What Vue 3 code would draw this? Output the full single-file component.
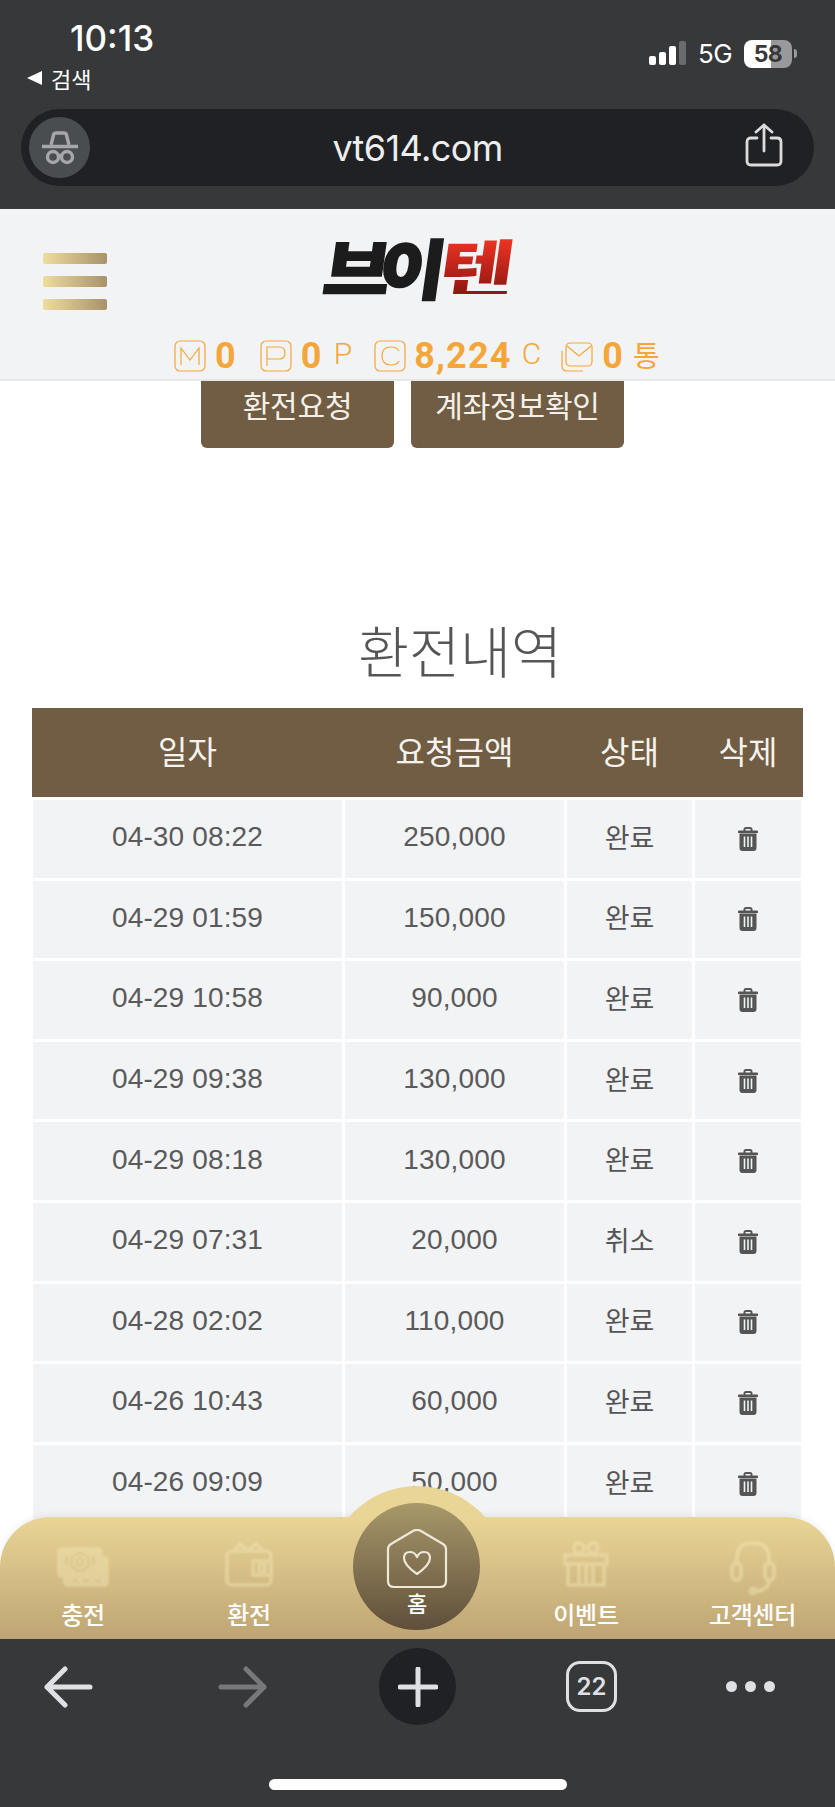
<template>
  <div class="phone">
    <section class="chrome">
      <div class="status">
        <div class="status-left">
          <div class="time">10:13</div>
          <div class="back-app"><span class="tri"></span>검색</div>
        </div>
        <div class="status-right">
          <div class="signal">
            <i class="s1"></i><i class="s2"></i><i class="s3"></i><i class="s4"></i>
          </div>
          <span class="net">5G</span>
          <div class="battery"><span>58</span></div>
          <i class="battery-tip"></i>
        </div>
      </div>
      <div class="url-bar">
        <div class="incognito">
          <svg width="38" height="34" viewBox="0 0 38 34" fill="none" stroke="#a5a7aa" stroke-width="3.400">
            <path d="M1 15.500h36" />
            <path d="M10 14l2.500-10q.5-2 2.500-2h8q2 0 2.500 2L28 14" />
            <circle cx="12" cy="26" r="5.500" />
            <circle cx="26" cy="26" r="5.500" />
            <path d="M17.500 24.500q1.500-1 3 0" stroke-width="2.500" />
          </svg>
        </div>
        <span class="url">vt614.com</span>
        <svg class="share" width="38" height="44" viewBox="0 0 38 44" fill="none" stroke="#dcdcde" stroke-width="2.800" stroke-linecap="round" stroke-linejoin="round">
          <path d="M19 28V2M11 9l8-7 8 7" />
          <path d="M12 15H6q-4 0-4 4v19q0 4 4 4h26q4 0 4-4V19q0-4-4-4h-6" />
        </svg>
      </div>
    </section>

    <header class="site-header">
      <div class="brand-row">
        <div class="burger"><i></i><i></i><i></i></div>
        <div class="logo"><span class="logo-black">브이</span><span class="logo-red">텐</span></div>
      </div>
      <div class="wallet">
        <span class="badge">
          <svg width="32" height="32" viewBox="0 0 32 32" fill="none" stroke="#f4a63a" stroke-width="1.200">
            <rect x="1" y="1" width="30" height="30" rx="5" />
            <path d="M7 25V8l9 12 9-12v17" />
          </svg>
        </span>
        <b class="num">0</b>
        <span class="badge gap-p">
          <svg width="32" height="32" viewBox="0 0 32 32" fill="none" stroke="#f4a63a" stroke-width="1.200">
            <rect x="1" y="1" width="30" height="30" rx="5" />
            <path d="M7 26V7h12q6 0 6 6t-6 6H7" />
          </svg>
        </span>
        <b class="num">0</b>
        <span class="unit unit-p">P</span>
        <span class="badge gap-c">
          <svg width="32" height="32" viewBox="0 0 32 32" fill="none" stroke="#f4a63a" stroke-width="1.200">
            <rect x="1" y="1" width="30" height="30" rx="5" />
            <path d="M25 11q-2-4-8-4-9 0-9 9t9 9q6 0 8-4" />
          </svg>
        </span>
        <b class="num coin">8,224</b>
        <span class="unit unit-c">C</span>
        <span class="badge gap-mail">
          <svg width="32" height="32" viewBox="0 0 32 32" fill="none" stroke="#f4a63a" stroke-width="1.200">
            <rect x="5" y="3" width="26" height="23" rx="4" />
            <path d="M6 6l12 10L30 6" />
            <path d="M1 11v15q0 5 5 5h16" />
          </svg>
        </span>
        <b class="num">0</b>
        <span class="unit kr">통</span>
      </div>
    </header>

    <main class="content">
      <div class="actions">
        <button class="act act-a">환전요청</button>
        <button class="act act-b">계좌정보확인</button>
      </div>

      <h2 class="title">환전내역</h2>

      <div class="table">
        <div class="tr th">
          <div>일자</div><div>요청금액</div><div>상태</div><div>삭제</div>
        </div>
        <div v-for="row in rows" :key="row.date" class="tr td">
          <div class="num-cell">{{ row.date }}</div>
          <div class="num-cell">{{ row.amount }}</div>
          <div class="state">{{ row.state }}</div>
          <div>
            <svg width="20" height="24" viewBox="0 0 20 24" fill="#555">
              <path d="M5.500 3.500V2.500Q5.500 0 8 0h4q2.500 0 2.500 2.500v1H19q1 0 1 1V6H0V4.500q0-1 1-1zM7.500 3.500h5V2h-5z" />
              <path fill-rule="evenodd" d="M1.500 6.500h17V21q0 3-3 3h-11q-3 0-3-3zM5.700 9.500v10.500h1.600V9.500zM9.200 9.500v10.500h1.600V9.500zM12.700 9.500v10.500h1.600V9.500z" />
            </svg>
          </div>
        </div>
      </div>

      <nav class="bottom-nav">
        <div class="bump"></div>
        <a class="nav-item">
          <svg width="52" height="40" viewBox="0 0 52 40" fill="none" stroke="#f5e8b5" stroke-width="3.600">
            <path d="M8 30v5q0 3 3 3h36q3 0 3-3V14q0-3-3-3h-3" fill="#f5e8b5" />
            <rect x="2" y="2" width="42" height="27" rx="3" fill="#f5e8b5" />
            <circle cx="23" cy="15" r="9" stroke="#dcc98c" stroke-width="2" />
            <circle cx="23" cy="15" r="3.500" stroke="#dcc98c" stroke-width="2" />
            <path d="M8 9l3 3-3 3 3 3M38 9l-3 3 3 3-3 3" stroke="#dcc98c" stroke-width="2" />
            <path d="M16 34h4M26 34h6M38 34h6" stroke="#dcc98c" stroke-width="2" />
          </svg>
          <span>충전</span>
        </a>
        <a class="nav-item">
          <svg width="48" height="46" viewBox="0 0 48 46" fill="none" stroke="#f5e8b5" stroke-width="3.600">
            <rect x="2" y="10" width="44" height="34" rx="5" />
            <path d="M9 10l6-7 8 6 8-6 7 7" />
            <rect x="28" y="20" width="18" height="14" />
            <rect x="34" y="24" width="6" height="6" />
          </svg>
          <span>환전</span>
        </a>
        <a class="nav-item home">
          <svg class="home-icon" width="62" height="60" viewBox="0 0 62 60" fill="none" stroke="#eee8d8" stroke-width="2.200" stroke-linejoin="round">
            <path d="M2 20q0-3 3-5L27 2q4-2 8 0l22 13q3 2 3 5v32q0 6-6 6H8q-6 0-6-6z" />
            <path d="M31 45Q18 36 18 29q0-6 6-6 5 0 7 5 2-5 7-5 6 0 6 6 0 7-13 16z" />
          </svg>
          <span>홈</span>
        </a>
        <a class="nav-item">
          <svg width="46" height="46" viewBox="0 0 46 46" fill="none" stroke="#f5e8b5" stroke-width="3.600">
            <circle cx="16" cy="7" r="5" />
            <circle cx="30" cy="7" r="5" />
            <rect x="2" y="14" width="42" height="9" />
            <path d="M5 23v21h36V23M16 23v21M30 23v21M23 23v21" />
          </svg>
          <span>이벤트</span>
        </a>
        <a class="nav-item">
          <svg width="46" height="54" viewBox="0 0 46 54" fill="none" stroke="#f5e8b5" stroke-width="4">
            <path d="M7 22v-5Q7 2 23 2t16 15v5" />
            <rect x="2" y="22" width="9" height="17" rx="4.500" />
            <rect x="35" y="22" width="9" height="17" rx="4.500" />
            <path d="M39 39q0 10-13 11" />
            <circle cx="23" cy="50" r="2.500" fill="#f5e8b5" />
          </svg>
          <span>고객센터</span>
        </a>
      </nav>
    </main>

    <footer class="toolbar">
      <div class="tools">
        <svg class="tool back" width="50" height="42" viewBox="0 0 50 42" fill="none" stroke="#dfe0e3" stroke-width="5" stroke-linecap="round" stroke-linejoin="round">
          <path d="M47 21H4M22 3L4 21l18 18" />
        </svg>
        <svg class="tool fwd" width="50" height="42" viewBox="0 0 50 42" fill="none" stroke="#77787a" stroke-width="5" stroke-linecap="round" stroke-linejoin="round">
          <path d="M3 21h43M28 3l18 18-18 18" />
        </svg>
        <div class="plus">
          <svg width="40" height="40" viewBox="0 0 40 40" stroke="#dfe0e3" stroke-width="5" stroke-linecap="round">
            <path d="M20 2v36M2 20h36" />
          </svg>
        </div>
        <div class="tabs">22</div>
        <div class="dots"><i></i><i></i><i></i></div>
      </div>
      <div class="home-bar"></div>
    </footer>
  </div>
</template>

<script setup>
const rows = [
  { date: '04-30 08:22', amount: '250,000', state: '완료' },
  { date: '04-29 01:59', amount: '150,000', state: '완료' },
  { date: '04-29 10:58', amount: '90,000', state: '완료' },
  { date: '04-29 09:38', amount: '130,000', state: '완료' },
  { date: '04-29 08:18', amount: '130,000', state: '완료' },
  { date: '04-29 07:31', amount: '20,000', state: '취소' },
  { date: '04-28 02:02', amount: '110,000', state: '완료' },
  { date: '04-26 10:43', amount: '60,000', state: '완료' },
  { date: '04-26 09:09', amount: '50,000', state: '완료' },
];
</script>

<style>
html, body {
  margin: 0;
  background: #fff;
}
</style>

<style scoped>
.phone {
  width: 835px;
  height: 1807px;
  display: flex;
  flex-direction: column;
  overflow: hidden;
  font-family: "Noto Sans CJK KR", "Liberation Sans", sans-serif;
  color: #555;
}

/* browser chrome */
.chrome {
  height: 209px;
  flex: none;
  box-sizing: border-box;
  background: #37383a;
  color: #fff;
}
.status {
  height: 109px;
  box-sizing: border-box;
  display: flex;
  justify-content: space-between;
}
.status-left {
  padding: 19px 0 0 27px;
}
.time {
  margin-left: 43px;
  font: 500 35px/38px Inter, sans-serif;
}
.back-app {
  display: flex;
  align-items: center;
  gap: 9px;
  margin-top: 7px;
  font-size: 22px;
  line-height: 28px;
}
.tri {
  width: 0;
  height: 0;
  border-top: 7px solid transparent;
  border-bottom: 7px solid transparent;
  border-right: 15px solid #fff;
}
.status-right {
  display: flex;
  align-items: flex-start;
  padding: 40px 38px 0 0;
}
.signal {
  display: flex;
  align-items: flex-end;
  gap: 3px;
  height: 24px;
  margin-top: 1px;
}
.signal i {
  width: 7px;
  border-radius: 2px;
  background: #fff;
}
.s1 { height: 9px; }
.s2 { height: 13px; }
.s3 { height: 19px; }
.signal .s4 { height: 24px; background: #6a6b6d; }
.net {
  margin-left: 12px;
  font: 400 26px/28px Inter, sans-serif;
  letter-spacing: -.6px;
}
.battery {
  width: 48px;
  height: 28px;
  margin-left: 12px;
  border-radius: 8px;
  background: linear-gradient(90deg, #fff 57%, #99999b 57%);
  text-align: center;
}
.battery span {
  font: 700 23px/28px Inter, sans-serif;
  letter-spacing: -.5px;
  color: #37383a;
}
.battery-tip {
  width: 3px;
  height: 9px;
  margin: 9px 0 0 2px;
  border-radius: 0 3px 3px 0;
  background: #99999b;
}
.url-bar {
  height: 77px;
  margin: 0 21px;
  padding: 0 31px 0 8px;
  display: flex;
  align-items: center;
  justify-content: space-between;
  border-radius: 39px;
  background: #202124;
}
.incognito {
  width: 61px;
  height: 61px;
  display: flex;
  align-items: center;
  justify-content: center;
  border-radius: 50%;
  background: #4a4d50;
}
.url {
  font: 400 36px/40px Inter, sans-serif;
  letter-spacing: -.6px;
  color: #eee;
}
.share {
  margin-top: -6px;
}

/* site header */
.site-header {
  height: 172px;
  flex: none;
  box-sizing: border-box;
  background: #f2f3f5;
  border-bottom: 2px solid #e6e7e9;
  position: relative;
  z-index: 2;
}
.brand-row {
  height: 131px;
  display: grid;
  grid-template-columns: 1fr auto 1fr;
  align-items: center;
  padding: 0 0 0 43px;
}
.burger {
  display: flex;
  flex-direction: column;
  gap: 12px;
  width: 64px;
  margin-top: 14px;
}
.burger i {
  height: 11px;
  border-radius: 2px;
  background: linear-gradient(90deg, #efdc9e, #a8926a);
}
.logo {
  display: flex;
  margin: 0 0 17px -40px;
  font-size: 72px;
  line-height: 62px;
  font-weight: 900;
  transform: skewX(-8deg) scaleY(.9);
}
.logo-black {
  letter-spacing: -11px;
  color: #1c1c1c;
  -webkit-text-stroke: 2px #1c1c1c;
}
.logo-red {
  color: transparent;
  background: linear-gradient(#ee3424, #8f1610);
  -webkit-background-clip: text;
  background-clip: text;
  transform: scaleX(1.14);
  transform-origin: left center;
  margin-left: 5px;
  margin-right: 6px;
}
.wallet {
  display: flex;
  align-items: center;
  height: 32px;
  padding-left: 174px;
  color: #f4a63a;
}
.badge {
  display: flex;
  width: 32px;
  height: 32px;
}
.gap-p { margin-left: 23px; }
.gap-c { margin-left: 22px; }
.gap-mail { margin-left: 20px; }
.num {
  margin-left: 9px;
  font: 700 36px/32px Roboto, sans-serif;
  letter-spacing: 1.200px;
}
.coin { margin-left: 8px; }
.unit {
  margin: -4px 0 0 12px;
  font: 300 30px/32px Roboto, sans-serif;
}
.unit-p { margin-left: 11px; }
.unit-c { margin-left: 10px; }
.unit.kr {
  margin: -4px 0 0 9px;
  font: 400 29px/32px "Noto Sans CJK KR", sans-serif;
}

/* page body */
.content {
  flex: 1;
  min-height: 0;
  position: relative;
  overflow: hidden;
  background: #fff;
}
.actions {
  display: flex;
  justify-content: center;
  gap: 17px;
  padding-right: 10px;
}
.act {
  height: 67px;
  padding: 0 0 22px;
  border: 0;
  border-radius: 0 0 6px 6px;
  background: #705d43;
  color: #f4f1ea;
  font: 400 30px/40px "Noto Sans CJK KR", sans-serif;
  letter-spacing: -.2px;
}
.act-a { width: 193px; }
.act-b { width: 213px; }
.title {
  margin: 162px 0 0;
  padding-left: 85px;
  text-align: center;
  font-size: 55.500px;
  line-height: 78px;
  font-weight: 300;
  color: #555;
}
.table {
  width: 771px;
  margin: 20px 0 0 32px;
}
.tr {
  display: grid;
  grid-template-columns: 309px 219px 125px 106px;
  column-gap: 3px;
  padding: 0 2px 0 1px;
  text-align: center;
}
.tr > div {
  display: flex;
  align-items: center;
  justify-content: center;
}
.th {
  height: 89px;
  background: #705d43;
  color: #f6f3ee;
  font-size: 32px;
  letter-spacing: 0;
}
.th > div {
  padding-bottom: 5px;
}
.td {
  height: 77.600px;
  margin-top: 3px;
}
.td > div {
  background: #f2f3f5;
}
.tr .num-cell {
  padding-bottom: 3px;
  font: 400 28px/40px "Liberation Sans", sans-serif;
  letter-spacing: .15px;
  color: #5a5a5a;
}
.tr .state {
  padding-bottom: 5px;
  font-size: 27px;
  color: #555;
}

/* bottom nav */
.bottom-nav {
  position: absolute;
  left: 0;
  right: 0;
  bottom: 0;
  height: 122px;
  display: grid;
  grid-template-columns: 166px 166px 170px 168px 165px;
  border-radius: 50px 50px 0 0;
  background: linear-gradient(#e9d596, #bea574);
  box-shadow: 0 -2px 6px rgba(0, 0, 0, .06);
}
.bump {
  position: absolute;
  left: 327px;
  top: -31px;
  width: 180px;
  height: 153px;
  border-radius: 90px 90px 0 0;
  background: linear-gradient(#e9d596 31px, #bea574 153px);
}
.nav-item {
  position: relative;
  height: 122px;
  display: flex;
  flex-direction: column;
  align-items: center;
  justify-content: flex-end;
  padding-bottom: 8px;
  box-sizing: border-box;
  color: #fff;
  font-size: 24px;
  line-height: 34px;
  font-weight: 500;
  letter-spacing: -.3px;
}
.nav-item svg {
  position: absolute;
  bottom: 52px;
  opacity: .45;
  filter: blur(.8px);
}
.nav-item:nth-child(6) svg {
  bottom: 44px;
}
.home {
  z-index: 1;
}
.home::before {
  content: "";
  position: absolute;
  left: 21px;
  top: -14px;
  width: 127px;
  height: 127px;
  border-radius: 50%;
  background: linear-gradient(#a8986a, #5f4f3a);
}
.home span {
  position: relative;
  margin-bottom: 12px;
  font-size: 22px;
}
.nav-item .home-icon {
  bottom: 50px;
  opacity: 1;
  filter: none;
}

/* browser toolbar */
.toolbar {
  height: 168px;
  flex: none;
  background: #37383a;
}
.tools {
  height: 86px;
  padding-top: 9px;
  box-sizing: border-box;
  display: flex;
  align-items: center;
}
.back { margin-left: 43px; }
.fwd { margin-left: 125px; }
.plus {
  width: 77px;
  height: 77px;
  margin-left: 111px;
  display: flex;
  align-items: center;
  justify-content: center;
  border-radius: 50%;
  background: #202124;
}
.tabs {
  width: 51px;
  height: 51px;
  margin-left: 110px;
  box-sizing: border-box;
  display: flex;
  align-items: center;
  justify-content: center;
  border: 3.500px solid #dfe0e3;
  border-radius: 14px;
  color: #dfe0e3;
  font: 600 24px/1 Inter, sans-serif;
}
.dots {
  display: flex;
  gap: 8px;
  margin-left: 109px;
}
.dots i {
  width: 11px;
  height: 11px;
  border-radius: 50%;
  background: #dfe0e3;
}
.home-bar {
  width: 298px;
  height: 11px;
  margin: 54px 0 0 269px;
  border-radius: 6px;
  background: #fff;
}
</style>
